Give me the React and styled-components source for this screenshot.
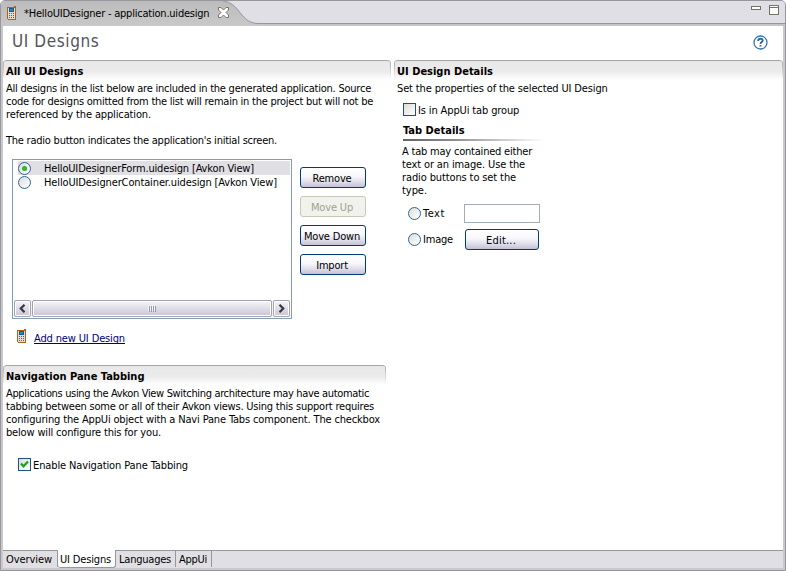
import React from 'react';
import styled, { createGlobalStyle } from 'styled-components';

const Global = createGlobalStyle`
  *, *::before, *::after { box-sizing: border-box; }
  body { margin: 0; background: #fff; }
  button, input { font: inherit; color: inherit; margin: 0; }
`;

const Frame = styled.div`
  width: 786px;
  height: 571px;
  display: flex;
  flex-direction: column;
  overflow: hidden;
  background: #c9c8cc;
  border: 1px solid #97969d;
  border-radius: 5px 5px 0 0;
  font: 11px/13px 'DejaVu Sans Condensed', 'DejaVu Sans', sans-serif;
  font-stretch: condensed;
  color: #000;
`;

const Txt = styled.span`
  letter-spacing: ${(p) => p.$ls || 0}px;
  white-space: pre;
`;

const TitleBar = styled.header`
  height: 25px;
  flex: none;
  display: flex;
  background: linear-gradient(#e0dfe5 22px, #97969d 22px, #97969d 23px, #c4c3c5 23px);
`;

const EditorTab = styled.div`
  height: 25px;
  width: 222px;
  flex: none;
  display: flex;
  align-items: center;
  padding: 0 0 2px 6px;
  background: linear-gradient(#bdbcbd, #c8c8c8);

  & > span { margin: 2px 0 0 7px; width: 194px; flex: none; }
  & > svg { flex: none; z-index: 1; }
`;

const WindowButtons = styled.div`
  margin: 4px 6px 0 auto;
  display: flex;
  gap: 8px;
`;

const Body = styled.main`
  flex: 1;
  min-height: 0;
  margin: 0 2px;
  background: #fff;
  display: flex;
  flex-direction: column;
`;

const FormHeading = styled.div`
  height: 34px;
  flex: none;
  display: flex;
  justify-content: space-between;
  padding: 6px 15px 0 9px;

  h1 {
    margin: 0;
    font: 17px/19px 'DejaVu Sans Condensed', 'DejaVu Sans', sans-serif;
    font-stretch: condensed;
    letter-spacing: 0.6px;
    color: #55555e;
  }
  svg { margin-top: 3px; }
`;

const Columns = styled.div`
  flex: 1;
  display: grid;
  grid-template-columns: 388px 389px;
  column-gap: 3px;
  align-items: start;
`;

const Section = styled.section`
  width: ${(p) => p.$w}px;
  margin-top: ${(p) => p.$mt || 0}px;
`;

const SectionTitle = styled.h2`
  margin: 0;
  height: 20px;
  padding: 4px 0 0 3px;
  font: inherit;
  line-height: 13px;
  font-weight: bold;
  border-top: 1px solid #a5a4a8;
  border-radius: 4px 4px 0 0;
  background:
    linear-gradient(#a5a4a8, #fff) left / 1px 100% no-repeat,
    linear-gradient(#a5a4a8, #fff) right / 1px 100% no-repeat,
    linear-gradient(#e8e8e8, #ebebeb 55%, #fff);
`;

const Para = styled.p`
  margin: ${(p) => p.$m || '2px 0 0 3px'};
  display: flex;
  flex-direction: column;
  height: ${(p) => p.$h}px;
`;

const Blank = styled.span`
  height: 13px;
`;

const DesignArea = styled.div`
  display: flex;
  gap: 8px;
  margin: 12px 0 0 9px;
`;

const ListBox = styled.div`
  width: 280px;
  height: 160px;
  border: 1px solid #7f9db9;
  padding: 1px;
  display: flex;
  flex-direction: column;
`;

const ListRow = styled.div`
  height: 14px;
  margin-left: 4px;
  display: flex;
  align-items: center;
  background: ${(p) => (p.$selected ? '#e0dfe3' : 'transparent')};

  & > span { margin-left: 13px; }
`;

const RadioDot = styled.span`
  && { margin-left: 0; }
  flex: none;
  width: 13px;
  height: 13px;
  border: 1px solid #2f6594;
  border-radius: 50%;
  display: grid;
  place-items: center;
  background: linear-gradient(135deg, #dcdcd7, #fff);

  &::after {
    content: '';
    width: 5px;
    height: 5px;
    border-radius: 50%;
    background: ${(p) => (p.$on ? 'radial-gradient(#36c436, #1fa01f)' : 'transparent')};
  }
`;

const ScrollBar = styled.div`
  margin-top: auto;
  height: 17px;
  display: grid;
  grid-template-columns: 17px 1fr 17px;
  gap: 1px;
  background: #f3f3f5;
`;

const ScrollPart = styled.div`
  border: 1px solid #a3a2ad;
  border-radius: 2px;
  box-shadow: inset 0 0 0 1px #fff;
  background: linear-gradient(#f5f5f8, #e0dfe8 45%, #c7c6d5);
  display: grid;
  place-items: center;
`;

const ButtonStack = styled.div`
  display: flex;
  flex-direction: column;
  gap: 8px;
  padding-top: 8px;
`;

const PushButton = styled.button`
  width: ${(p) => p.$w || 66}px;
  height: 21px;
  padding: 1px 0 0;
  border: 1px solid #003c74;
  border-radius: 3px;
  background: linear-gradient(#fff, #f7f7fb 45%, #dddce8 75%, #c3c1d6);
  line-height: 13px;
  text-align: center;
  justify-self: center;

  & > span { margin-right: 2px; }

  &:disabled {
    border-color: #c9c7ba;
    background: #f2f2ec;
    color: #a1a192;
  }
`;

const LinkRow = styled.div`
  display: flex;
  margin: 9px 0 0 14px;
  height: 18px;

  a {
    margin: 4px 0 0 7px;
    height: 12px;
    line-height: 13px;
    color: #00007c;
    border-bottom: 1px solid #00007c;
    text-decoration: none;
  }
`;

const Option = styled.label`
  height: 13px;
  display: flex;
  align-items: center;
  gap: 2px;
  margin: ${(p) => p.$m || 0};

  & > ${Txt} { padding-top: ${(p) => p.$drop || 0}px; }
`;

const CheckSquare = styled.span`
  width: 13px;
  height: 13px;
  border: 1px solid #1c5180;
  background: linear-gradient(135deg, #dcdcd7, #fff);
  display: grid;
  place-items: center;
`;

const SubTitle = styled.h3`
  margin: 8px 0 0 9px;
  height: 17px;
  width: 142px;
  font: inherit;
  font-weight: bold;
  line-height: 13px;
  background: linear-gradient(90deg, #62616b, #8d8c94 35%, #fff) bottom / 100% 2px no-repeat;
`;

const TypeGrid = styled.div`
  display: grid;
  grid-template-columns: 56px 76px;
  grid-template-rows: 19px 21px;
  row-gap: 6px;
  align-items: center;
  margin: 7px 0 0 14px;
`;

const TextField = styled.input`
  width: 76px;
  height: 19px;
  border: 1px solid #a5acb2;
  background: #fff;
  outline: none;
`;

const PageTabs = styled.nav`
  height: 18px;
  flex: none;
  display: flex;
  background: linear-gradient(#97969d 1px, #e0dfe3 1px);
`;

const PageTab = styled.div`
  width: ${(p) => p.$w}px;
  height: ${(p) => (p.$active ? 18 : 17)}px;
  padding: 3px 0 0 ${(p) => p.$pad || 3}px;
  border-right: 1px solid #97969d;
  background: ${(p) => (p.$active ? '#fff' : 'transparent')};
  border-bottom: ${(p) => (p.$active ? '1px solid #97969d' : '0')};
  border-radius: ${(p) => (p.$active ? '0 0 3px 3px' : '0')};
`;

const BottomEdge = styled.div`
  height: 2px;
  flex: none;
`;

const PhoneIcon = () => (
  <svg width="10" height="16" viewBox="0 0 10 16" shapeRendering="crispEdges">
    <path d="M0 2h7V1h2v14H1v-1H0z" fill="#aa621c" />
    <path d="M1 3h7v11H1z" fill="#e4ded2" />
    <path d="M2 3h5v4H2z" fill="#155b8f" />
    <path d="M3 4h3v2H3z" fill="#2687bd" />
    <path d="M2 8h1v1H2zM4 8h1v1H4zM6 8h1v1H6zM2 10h1v1H2zM4 10h1v1H4zM6 10h1v1H6zM2 12h1v1H2zM4 12h1v1H4zM6 12h1v1H6z" fill="#56606b" />
  </svg>
);

const TabCurve = () => (
  <svg width="40" height="25" viewBox="0 0 40 25">
    <defs>
      <linearGradient id="tabFill" x1="0" y1="0" x2="0" y2="25" gradientUnits="userSpaceOnUse">
        <stop stopColor="#bdbcbd" />
        <stop offset="1" stopColor="#c8c8c8" />
      </linearGradient>
    </defs>
    <path d="M0 0C8 1 12 5 17 11.500 23 19 27 22.500 36 22.500H40V25H0z" fill="url(#tabFill)" />
    <path d="M0 0C8 1 12 5 17 11.500 23 19 27 22.500 36 22.500H40" fill="none" stroke="#97969d" />
  </svg>
);

const CloseIcon = () => (
  <svg width="11" height="11" viewBox="0 0 11 11">
    <path
      d="M.5.5h2.500l2.500 2.500L8 .5h2.500V3L8 5.500 10.500 8v2.500H8L5.500 8 3 10.500H.5V8L3 5.500.5 3z"
      fill="#fff"
      stroke="#77766b"
    />
  </svg>
);

const HelpIcon = () => (
  <svg width="15" height="15" viewBox="0 0 15 15">
    <circle cx="7.500" cy="7.500" r="6.500" fill="#fff" stroke="#3a76ad" strokeWidth="1.300" />
    <path d="M5.300 6V5.200C5.300 3.300 9.700 3.300 9.700 5.500 9.700 7 7.500 7 7.500 8.900M7.500 9.900v1.600" fill="none" stroke="#2c6aa5" strokeWidth="1.900" />
  </svg>
);

const MinimizeIcon = () => (
  <svg width="10" height="10" shapeRendering="crispEdges">
    <rect x=".5" y="1.500" width="9" height="3" fill="#fff" stroke="#777266" />
  </svg>
);

const MaximizeIcon = () => (
  <svg width="10" height="10" shapeRendering="crispEdges">
    <rect x=".5" y=".5" width="9" height="9" fill="#fff" stroke="#777266" />
    <path d="M1 2.500h8" stroke="#777266" />
  </svg>
);

const Chevron = ({ flip }) => (
  <svg width="7" height="9" viewBox="0 0 7 9">
    <path d={flip ? 'M1.500.8 5.200 4.500 1.500 8.200' : 'M5.500.8 1.800 4.500 5.500 8.200'} fill="none" stroke="#37363f" strokeWidth="2.200" />
  </svg>
);

const Grip = () => (
  <svg width="8" height="7" shapeRendering="crispEdges">
    <path d="M0 0h1v6H0zM2 0h1v6H2zM4 0h1v6H4zM6 0h1v6H6z" fill="#f6f6fa" />
    <path d="M1 1h1v6H1zM3 1h1v6H3zM5 1h1v6H5zM7 1h1v6H7z" fill="#9897aa" />
  </svg>
);

const Tick = () => (
  <svg width="9" height="9" viewBox="0 0 9 9">
    <path d="M1 3.500 3.500 6.300 8 1.500" fill="none" stroke="#21a121" strokeWidth="2.300" />
  </svg>
);

const introLines = [
  ['All designs in the list below are included in the generated application. Source', -0.231],
  ['code for designs omitted from the list will remain in the project but will not be', -0.245],
  ['referenced by the application.', -0.134],
  null,
  ["The radio button indicates the application's initial screen.", -0.231],
];

const tabbingLines = [
  ['Applications using the Avkon View Switching architecture may have automatic', -0.341],
  ['tabbing between some or all of their Avkon views. Using this support requires', -0.212],
  ['configuring the AppUi object with a Navi Pane Tabs component. The checkbox', -0.158],
  ['below will configure this for you.', -0.17],
];

const detailLines = [
  ['A tab may contained either', -0.207],
  ['text or an image. Use the', -0.135],
  ['radio buttons to set the', -0.12],
  ['type.', -0.05],
];

const Lines = ({ lines }) =>
  lines.map((l, i) => (l ? <Txt key={i} $ls={l[1]}>{l[0]}</Txt> : <Blank key={i} />));

export default function App() {
  return (
    <>
      <Global />
      <Frame>
        <TitleBar>
          <EditorTab>
            <PhoneIcon />
            <Txt $ls={-0.22}>*HelloUIDesigner - application.uidesign</Txt>
            <CloseIcon />
          </EditorTab>
          <TabCurve />
          <WindowButtons>
            <MinimizeIcon />
            <MaximizeIcon />
          </WindowButtons>
        </TitleBar>
        <Body>
          <FormHeading>
            <h1>UI Designs</h1>
            <HelpIcon />
          </FormHeading>
          <Columns>
            <div>
              <Section $w={388}>
                <SectionTitle><Txt>All UI Designs</Txt></SectionTitle>
                <Para $h={65}><Lines lines={introLines} /></Para>
                <DesignArea>
                  <ListBox>
                    <ListRow $selected>
                      <RadioDot $on />
                      <Txt $ls={-0.16}>HelloUIDesignerForm.uidesign [Avkon View]</Txt>
                    </ListRow>
                    <ListRow>
                      <RadioDot />
                      <Txt $ls={-0.132}>HelloUIDesignerContainer.uidesign [Avkon View]</Txt>
                    </ListRow>
                    <ScrollBar>
                      <ScrollPart><Chevron /></ScrollPart>
                      <ScrollPart><Grip /></ScrollPart>
                      <ScrollPart><Chevron flip /></ScrollPart>
                    </ScrollBar>
                  </ListBox>
                  <ButtonStack>
                    <PushButton><Txt $ls={-0.18}>Remove</Txt></PushButton>
                    <PushButton disabled><Txt $ls={-0.17}>Move Up</Txt></PushButton>
                    <PushButton><Txt $ls={-0.19}>Move Down</Txt></PushButton>
                    <PushButton><Txt $ls={-0.2}>Import</Txt></PushButton>
                  </ButtonStack>
                </DesignArea>
                <LinkRow>
                  <PhoneIcon />
                  <a><Txt $ls={-0.14}>Add new UI Design</Txt></a>
                </LinkRow>
              </Section>
              <Section $w={383} $mt={19}>
                <SectionTitle><Txt>Navigation Pane Tabbing</Txt></SectionTitle>
                <Para $h={52}><Lines lines={tabbingLines} /></Para>
                <Option $m="19px 0 0 15px" $drop={1}>
                  <CheckSquare><Tick /></CheckSquare>
                  <Txt $ls={-0.119}>Enable Navigation Pane Tabbing</Txt>
                </Option>
              </Section>
            </div>
            <Section $w={389}>
              <SectionTitle><Txt>UI Design Details</Txt></SectionTitle>
              <Para $h={13}><Txt $ls={-0.14}>Set the properties of the selected UI Design</Txt></Para>
              <Option $m="8px 0 0 9px" $drop={1}>
                <CheckSquare />
                <Txt $ls={-0.13}>Is in AppUi tab group</Txt>
              </Option>
              <SubTitle><Txt>Tab Details</Txt></SubTitle>
              <Para $m="4px 0 0 8px" $h={52}><Lines lines={detailLines} /></Para>
              <TypeGrid>
                <Option><RadioDot /><Txt $ls={0.5}>Text</Txt></Option>
                <TextField />
                <Option><RadioDot /><Txt $ls={-0.2}>Image</Txt></Option>
                <PushButton $w={74}><Txt $ls={0.2}>Edit...</Txt></PushButton>
              </TypeGrid>
            </Section>
          </Columns>
          <PageTabs>
            <PageTab $w={55}><Txt $ls={-0.074}>Overview</Txt></PageTab>
            <PageTab $w={58} $pad={2} $active><Txt $ls={-0.164}>UI Designs</Txt></PageTab>
            <PageTab $w={60}><Txt $ls={-0.222}>Languages</Txt></PageTab>
            <PageTab $w={36}><Txt $ls={-0.266}>AppUi</Txt></PageTab>
          </PageTabs>
        </Body>
        <BottomEdge />
      </Frame>
    </>
  );
}
